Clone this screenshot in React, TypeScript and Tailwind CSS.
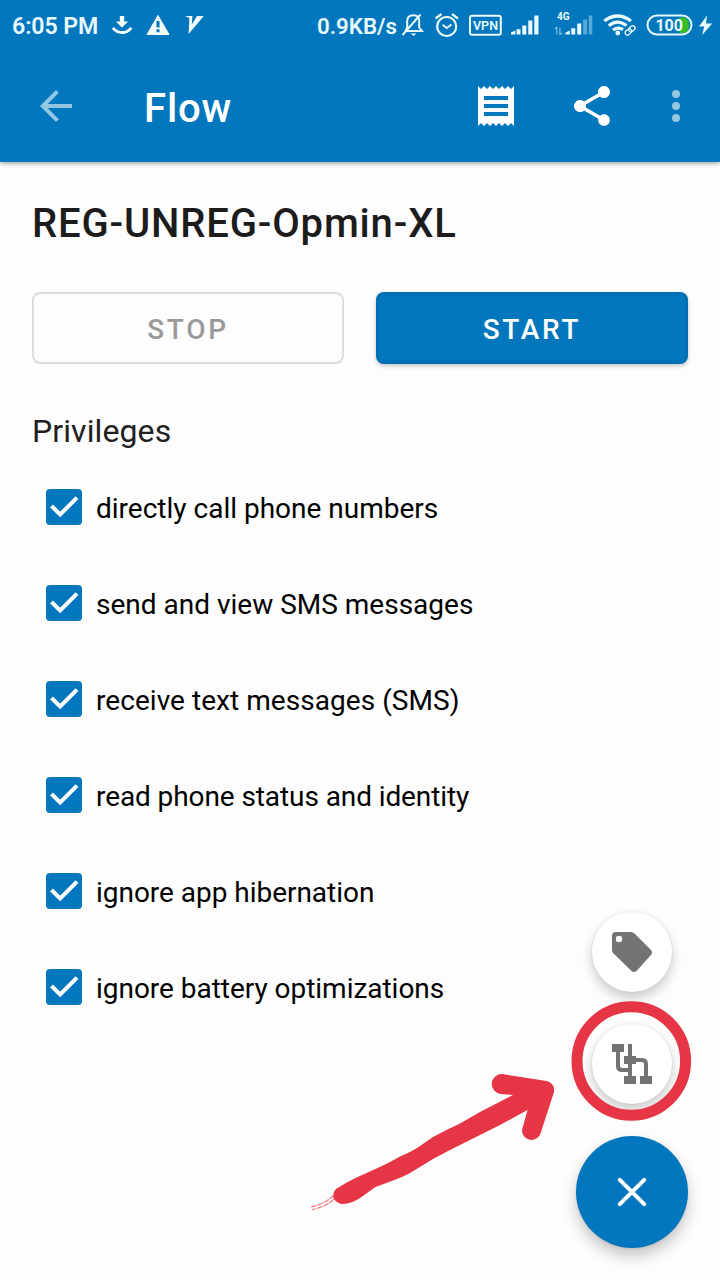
import type { ReactNode } from "react";

const privileges = [
  { label: "directly call phone numbers", spacing: "" },
  { label: "send and view SMS messages", spacing: "" },
  { label: "receive text messages (SMS)", spacing: "tracking-[0.05px]" },
  { label: "read phone status and identity", spacing: "tracking-[-0.09px]" },
  { label: "ignore app hibernation", spacing: "tracking-[-0.03px]" },
  { label: "ignore battery optimizations", spacing: "tracking-[-0.03px]" },
];

function StatusBar() {
  return (
    <div className="flex h-[50px] items-start pl-3 text-[#e9fafd]">
      <div className="flex h-[50px] w-[100px] items-center pt-[3px] text-[23.2px] font-semibold leading-none">
        <span className="whitespace-nowrap tracking-[-0.1px]">6:05 PM</span>
      </div>
      <svg className="h-[50px] w-[98px]" viewBox="112 0 98 50" fill="none">
        <path d="M119.8 16h4.4v5.5h4L122 27.5l-6.200-6h4z" fill="#f6fdf8" />
        <path d="M112.800 27.800Q116.500 32.500 122 32.500T131.300 27.800" stroke="#f6fdf8" strokeWidth="2.800" />
        <path d="M158 15.500L169 34.500H147z" fill="#f6fdf8" stroke="#f6fdf8" strokeWidth="1" strokeLinejoin="round" />
        <path d="M158 21v6.500M158 29.300v3" stroke="#0277bd" strokeWidth="3" />
        <path d="M185 16h7.400l-.6 8.500L197 16h6.800L188.600 34l.8-16z" fill="#f6fdf8" />
      </svg>
      <div className="ml-[107px] flex h-[50px] w-[85px] items-center pt-[3px] text-[22.3px] font-semibold leading-none">
        <span className="whitespace-nowrap">0.9KB/s</span>
      </div>
      <svg className="h-[50px] w-[318px]" viewBox="402 0 318 50" fill="none" stroke="currentColor">
        <path d="M405.500 31h16.500l-2.800-3.500v-6.500q0-5.800-6-5.800t-6 5.800v6.500zM402.500 35L420.500 14.500" strokeWidth="2" />
        <path d="M410.500 33.500h6L413.500 36z" fill="currentColor" stroke="none" />
        <circle cx="446.700" cy="26.500" r="9.500" strokeWidth="2.200" />
        <path d="M442.600 24.800l4.100 3.200 4.800-3.500" strokeWidth="2" />
        <path d="M435.500 18.500l6-4.500M458 18.500l-6-4.500" strokeWidth="2.200" />
        <rect x="470" y="15.700" width="30.800" height="19" rx="2" strokeWidth="2" />
        <text x="485.500" y="30" textAnchor="middle" fill="currentColor" stroke="none" className="text-[12.5px] font-semibold">VPN</text>
        <g fill="currentColor" stroke="none">
          <path d="M511 34.500v-2l4.300-2v4zM516.500 29.300h4v5.200h-4zM522.300 25.500h4v9h-4zM528.300 20.500h4v14h-4zM534.300 15.500h4.200v19h-4.200z" />
          <path d="M565.500 34.500v-2l4.300-2v4zM571.200 28.300h4v6.200h-4zM577.200 23.500h4v11h-4z" />
          <path d="M583.200 19.500h3.800v15h-3.800zM588.700 15.500h3.600v19h-3.600z" opacity=".38" />
          <path d="M556.800 34.500v-7L554.700 29M559.900 27.500v7L562 33" stroke="currentColor" strokeWidth="1.200" fill="none" opacity=".55" />
          <text x="557" y="20" className="text-[10px] font-bold">4G</text>
        </g>
        <g strokeWidth="3.200">
          <path d="M604.300 21Q617.500 11 631 21" />
          <path d="M608.800 25.700Q617.500 18.500 626.500 25.500" />
          <path d="M613 30Q618 26.300 623 29.600" />
        </g>
        <circle cx="617.800" cy="33" r="2.400" fill="currentColor" stroke="none" />
        <g strokeWidth="1.300" transform="rotate(-42 630 30.500)">
          <rect x="624.300" y="28.200" width="7" height="4.600" rx="2.300" />
          <rect x="629" y="28.200" width="7" height="4.600" rx="2.300" />
        </g>
        <path d="M679.500 17.500h3q6.500 0 6.500 7.700t-6.500 7.700h-3z" fill="#36bd26" stroke="none" />
        <rect x="647.500" y="15.500" width="44" height="19" rx="9.500" strokeWidth="2" />
        <text x="669.200" y="31" textAnchor="middle" fill="currentColor" stroke="none" className="text-[16px] font-bold">100</text>
        <path d="M707 15.500l-8 11h5.200l-2 8.500 10-11.500H706z" fill="currentColor" stroke="none" />
      </svg>
    </div>
  );
}

function AppBar() {
  return (
    <header className="h-[162px] shrink-0 bg-[#0277bd] shadow-[0_1px_5px_rgba(0,0,0,0.42)]">
      <StatusBar />
      <div className="flex h-28 items-center">
        <svg className="ml-8 size-12 text-[#93c6e3]" viewBox="0 0 24 24" fill="currentColor">
          <path d="M20 11H7.830l5.590-5.590L12 4l-8 8 8 8 1.410-1.410L7.830 13H20v-2z" />
        </svg>
        <h1 className="ml-16 mt-1.5 w-[328px] text-[40px] font-medium leading-[48px] tracking-[0.85px] text-white">Flow</h1>
        <svg className="size-12 text-white" viewBox="0 0 24 24" fill="currentColor">
          <path d="M18 17H6v-2h12v2zm0-4H6v-2h12v2zm0-4H6V7h12v2zM3 22l1.500-1.500L6 22l1.500-1.500L9 22l1.500-1.500L12 22l1.500-1.500L15 22l1.500-1.500L18 22l1.500-1.500L21 22V2l-1.500 1.500L18 2l-1.500 1.500L15 2l-1.500 1.500L12 2l-1.500 1.500L9 2 7.500 3.500 6 2 4.500 3.500 3 2v20z" />
        </svg>
        <svg className="ml-12 size-12 text-white" viewBox="0 0 24 24" fill="currentColor">
          <path d="M18 16.080c-.76 0-1.440.3-1.960.77L8.910 12.700c.05-.23.09-.46.09-.7s-.04-.47-.09-.7l7.050-4.110c.54.5 1.250.81 2.040.81 1.660 0 3-1.340 3-3s-1.340-3-3-3-3 1.340-3 3c0 .24.04.47.09.7L8.040 9.810C7.500 9.310 6.790 9 6 9c-1.660 0-3 1.340-3 3s1.340 3 3 3c.79 0 1.500-.31 2.040-.81l7.120 4.160c-.05.21-.08.43-.08.65 0 1.610 1.310 2.920 2.920 2.920s2.920-1.310 2.920-2.920-1.310-2.920-2.920-2.920z" />
        </svg>
        <svg className="ml-9 size-12 text-[#93c6e3]" viewBox="0 0 24 24" fill="currentColor">
          <circle cx="12" cy="6" r="2" />
          <circle cx="12" cy="12" r="2" />
          <circle cx="12" cy="18" r="2" />
        </svg>
      </div>
    </header>
  );
}

function Privilege({ label, spacing }: { label: string; spacing: string }) {
  return (
    <li className="flex h-24 items-center">
      <span className="ml-3.5 flex size-9 items-center justify-center rounded-[4px] bg-[#0277bd]">
        <svg className="size-9" viewBox="0 0 36 36" fill="none" stroke="#fff" strokeWidth="4">
          <path d="M5.500 17l8.700 8.500L31 8.700" />
        </svg>
      </span>
      <span className={`ml-3.5 mt-[3px] text-[28px] leading-9 text-black ${spacing}`}>{label}</span>
    </li>
  );
}

function MiniFab({ label, children }: { label: string; children: ReactNode }) {
  return (
    <button
      aria-label={label}
      className="flex size-20 items-center justify-center rounded-full bg-white shadow-[0_6px_12px_rgba(0,0,0,0.2),0_0_3px_rgba(0,0,0,0.08)]"
    >
      {children}
    </button>
  );
}

function FloatingActions() {
  return (
    <div className="absolute bottom-8 right-8 flex flex-col items-center gap-8">
      <MiniFab label="Tag">
        <svg className="size-12" viewBox="0 0 48 48">
          <path fillRule="evenodd" d="M8 4h14.500q2.500 0 4 1.500L42.500 21.500q3 3 0 6L29 42.500q-3 3-6 0L5.500 25.500Q4 24 4 22V8q0-4 4-4zM11 7.800a3.200 3.200 0 100 6.400 3.200 3.200 0 000-6.400z" fill="#737373" />
        </svg>
      </MiniFab>
      <MiniFab label="Flowchart">
        <svg className="size-12" viewBox="0 0 48 48">
          <path d="M10 9v17q0 4 4 4h8M22 4v34M22 20h12q4 0 4 4v14" fill="none" stroke="#737373" strokeWidth="4" />
          <path d="M4 4h12v8H4zM16 16h12v8H16zM16 36h12v8H16zM32 36h12v8H32z" fill="#737373" />
        </svg>
      </MiniFab>
      <button
        aria-label="Close"
        className="flex size-28 items-center justify-center rounded-full bg-[#0277bd] shadow-[0_8px_15px_rgba(0,0,0,0.22),0_1px_3px_rgba(0,0,0,0.08)]"
      >
        <svg className="size-12" viewBox="0 0 48 48" fill="none" stroke="#fff" strokeWidth="4">
          <path d="M11.800 11.800l24.400 24.400M36.200 11.800L11.800 36.200" strokeLinecap="round" />
        </svg>
      </button>
    </div>
  );
}

function Annotation() {
  return (
    <svg className="pointer-events-none absolute bottom-[60px] right-[20px] h-[230px] w-[400px]" viewBox="300 990 400 230" fill="none">
      <circle cx="631.300" cy="1061" r="54.300" stroke="#e63544" strokeWidth="11" />
      <path
        d="M336 1189 Q345 1183 356.500 1177.500 L376.500 1168.500 Q389 1163 400 1156.500 Q413 1151 420 1146 L433 1137 Q446 1130 460 1123.500 L480 1112 L513 1095 L501 1094 A10 10 0 0 1 502.500 1074 L546.500 1081 Q555 1083 554 1092 L540.500 1133.500 Q538 1140 531 1140 Q522 1138 522 1130 L527.500 1110 L500 1125 L467 1141.500 L450 1150 L433 1159 L410 1173 Q401 1178 393 1180.500 L375 1187.300 L363 1196 Q356 1201 350 1202.700 Q346 1204 341.500 1204 Q334 1202 333 1196 Q333 1192 336 1189 Z"
        fill="#e63544"
      />
      <path d="M334 1195Q325 1204 311 1207M334 1199Q326 1207 312 1209.500" stroke="#e97580" strokeWidth="1.100" strokeDasharray="6 1" />
    </svg>
  );
}

export default function App() {
  return (
    <div className="relative flex h-[1280px] w-[720px] flex-col overflow-hidden bg-[#fdfdfd] font-[Roboto,sans-serif]">
      <AppBar />
      <main className="flex flex-col px-8">
        <h2 className="mt-[38px] text-[40px] font-medium leading-[48px] tracking-[0.84px] text-[#1c1c1c]">REG-UNREG-Opmin-XL</h2>
        <div className="mt-[44px] grid grid-cols-2 gap-8">
          <button className="h-[72px] rounded-[8px] border-2 border-[#dedede] pt-[3px] text-[28px] font-medium tracking-[2.700px] text-[#9a9a9a]">
            STOP
          </button>
          <button className="h-[72px] rounded-[8px] bg-[#0277bd] pt-[3px] text-[28px] font-medium tracking-[2.700px] text-white shadow-[0_2px_4px_rgba(0,0,0,0.22),inset_0_0_5px_rgba(0,50,110,0.35)]">
            START
          </button>
        </div>
        <h3 className="mt-[47px] text-[32px] leading-10 tracking-[0.1px] text-[#202020]">Privileges</h3>
        <ul className="mt-2 flex flex-col">
          {privileges.map(({ label, spacing }) => (
            <Privilege key={label} label={label} spacing={spacing} />
          ))}
        </ul>
      </main>
      <FloatingActions />
      <Annotation />
    </div>
  );
}
